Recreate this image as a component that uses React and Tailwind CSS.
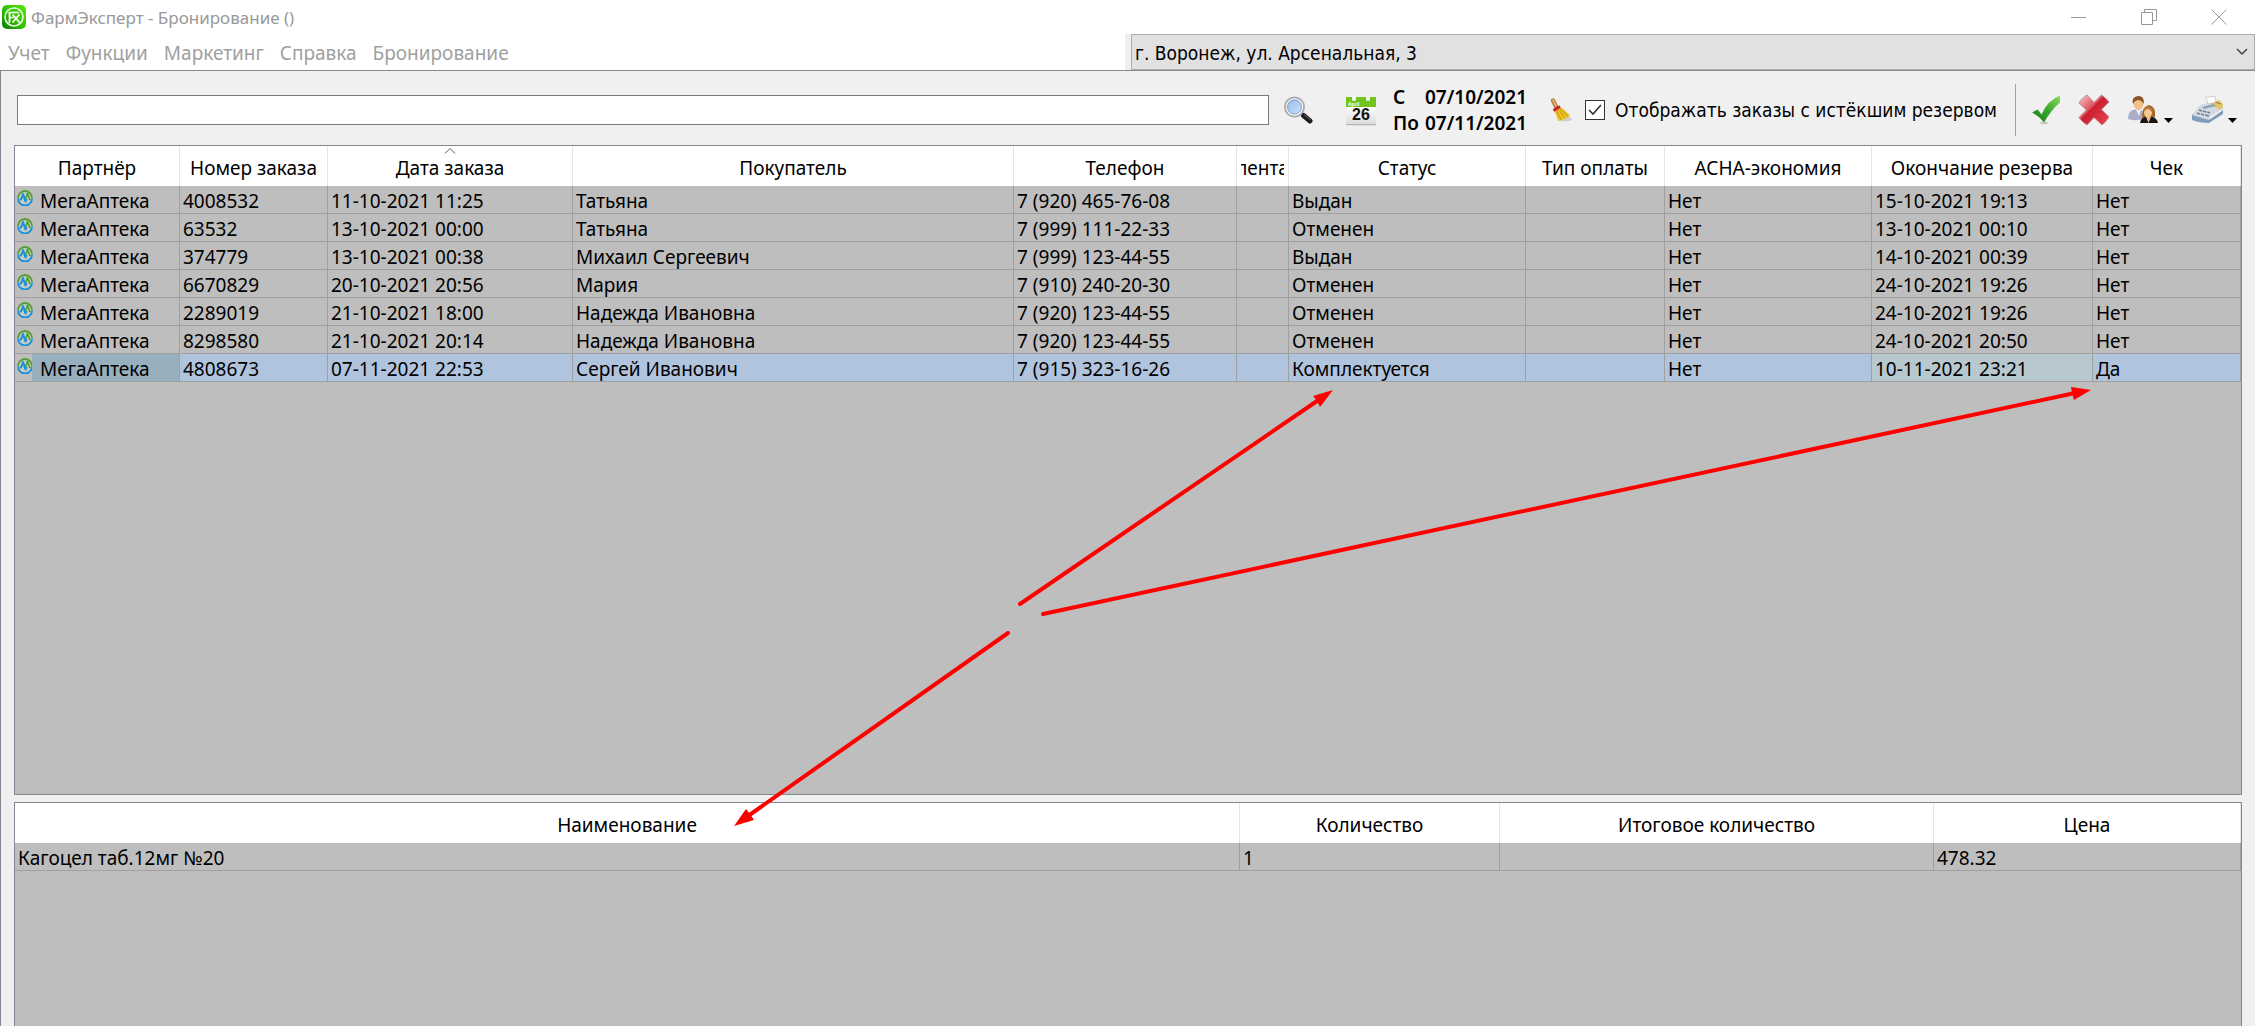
import { useState } from 'react';

const MENU = ['Учет', 'Функции', 'Маркетинг', 'Справка', 'Бронирование'];

const ORDER_COLUMNS = [
  { title: 'Партнёр', width: 'w-[165px]' },
  { title: 'Номер заказа', width: 'w-[148px]' },
  { title: 'Дата заказа', width: 'w-[245px]', sorted: true },
  { title: 'Покупатель', width: 'w-[441px]' },
  { title: 'Телефон', width: 'w-[223px]' },
  { title: 'лента', narrow: true, width: 'w-[52px]' },
  { title: 'Статус', width: 'w-[237px]' },
  { title: 'Тип оплаты', width: 'w-[139px]' },
  { title: 'АСНА-экономия', width: 'w-[207px]' },
  { title: 'Окончание резерва', width: 'w-[221px]' },
  { title: 'Чек', width: '' },
];

const ORDERS = [
  ['4008532', '11-10-2021 11:25', 'Татьяна', '7 (920) 465-76-08', '', 'Выдан', '', 'Нет', '15-10-2021 19:13', 'Нет'],
  ['63532', '13-10-2021 00:00', 'Татьяна', '7 (999) 111-22-33', '', 'Отменен', '', 'Нет', '13-10-2021 00:10', 'Нет'],
  ['374779', '13-10-2021 00:38', 'Михаил Сергеевич', '7 (999) 123-44-55', '', 'Выдан', '', 'Нет', '14-10-2021 00:39', 'Нет'],
  ['6670829', '20-10-2021 20:56', 'Мария', '7 (910) 240-20-30', '', 'Отменен', '', 'Нет', '24-10-2021 19:26', 'Нет'],
  ['2289019', '21-10-2021 18:00', 'Надежда Ивановна', '7 (920) 123-44-55', '', 'Отменен', '', 'Нет', '24-10-2021 19:26', 'Нет'],
  ['8298580', '21-10-2021 20:14', 'Надежда Ивановна', '7 (920) 123-44-55', '', 'Отменен', '', 'Нет', '24-10-2021 20:50', 'Нет'],
  ['4808673', '07-11-2021 22:53', 'Сергей Иванович', '7 (915) 323-16-26', '', 'Комплектуется', '', 'Нет', '10-11-2021 23:21', 'Да'],
];

const ITEM_COLUMNS = [
  { title: 'Наименование', width: 'w-[1225px]' },
  { title: 'Количество', width: 'w-[260px]' },
  { title: 'Итоговое количество', width: 'w-[434px]' },
  { title: 'Цена', width: '' },
];

const ITEMS = [['Кагоцел таб.12мг №20', '1', '', '478.32']];

/* ── Icons ── */

function AppLogo() {
  return (
    <svg className="size-6" viewBox="0 0 24 24" fill="none">
      <defs>
        <linearGradient id="logo" x1="1" y1="0" x2="0" y2="1">
          <stop offset="0" stopColor="#5be80a" />
          <stop offset="0.5" stopColor="#35c400" />
          <stop offset="1" stopColor="#0a7a0c" />
        </linearGradient>
      </defs>
      <rect width="24" height="24" rx="5" fill="url(#logo)" />
      <circle cx="12" cy="12" r="9" stroke="#e9fbe0" strokeWidth="1.6" />
      <path d="M7.5 18V7.5h9.5M7.5 12.5h4M10.5 9.5l7 8M17.5 9.5l-7 8" stroke="#fff" strokeWidth="1.7" />
    </svg>
  );
}

function PulseIcon() {
  return (
    <svg className="size-4 shrink-0" viewBox="0 0 16 16" fill="none">
      <circle cx="8" cy="8" r="7" fill="#c6cbc4" />
      <path d="M1 8A7 7 0 0 1 15 8" stroke="#55a035" strokeWidth="1.8" />
      <path d="M1 8.5a7 7 0 0 0 14 0" stroke="#1b90dc" strokeWidth="1.8" />
      <path d="M8.5 9l2-5.500L13 10" stroke="#55a035" strokeWidth="1.8" strokeLinejoin="round" />
      <path d="M2.500 9.500h1.500L6 4l2.500 7.500L9.500 9" stroke="#1b90dc" strokeWidth="2" strokeLinejoin="round" />
    </svg>
  );
}

function SearchIcon() {
  return (
    <svg className="h-7 w-[30px]" viewBox="0 0 30 28" fill="none">
      <defs>
        <linearGradient id="lens" x1="0" y1="0" x2="1" y2="1">
          <stop offset="0" stopColor="#8fb8ea" />
          <stop offset="1" stopColor="#d5e6fa" />
        </linearGradient>
      </defs>
      <path d="M18 17l3 3" stroke="#8a8a8a" strokeWidth="3" />
      <path d="M20.5 19.5l6.5 5.5" stroke="#1c1c1c" strokeWidth="5" strokeLinecap="round" />
      <path d="M21.5 19l5.5 4.5" stroke="#6b6b6b" strokeWidth="1" strokeLinecap="round" />
      <circle cx="11.5" cy="11" r="9.5" fill="url(#lens)" stroke="#a9a9a9" strokeWidth="2" />
      <circle cx="11.5" cy="11" r="8" stroke="#f5f5f5" strokeWidth="1.5" />
      <circle cx="11.5" cy="11" r="7" stroke="#7393bd" strokeWidth="0.8" />
    </svg>
  );
}

function CalendarIcon() {
  return (
    <svg className="size-8" viewBox="0 0 32 32">
      <defs>
        <linearGradient id="page" x1="0" y1="0" x2="0" y2="1">
          <stop offset="0" stopColor="#fff" />
          <stop offset="1" stopColor="#dcdcdc" />
        </linearGradient>
      </defs>
      <path d="M1 30.5h30" stroke="#b5b5b5" strokeWidth="1.5" />
      <path d="M2 12h28l1 18H1z" fill="url(#page)" />
      <path d="M1 3h30v10H1z" fill="#74c41f" />
      <path d="M7 1h4v5q-2 2-4 0zM21 1h4v5q-2 2-4 0z" fill="#f7f7f7" />
      <text x="3" y="12" fontSize="5" fontWeight="700" fontFamily="Liberation Sans, sans-serif" fill="#fff">April</text>
      <text x="16" y="26" textAnchor="middle" fontSize="16" fontWeight="700" fontFamily="Liberation Sans, sans-serif" fill="#111">26</text>
    </svg>
  );
}

function BroomIcon() {
  return (
    <svg className="size-6" viewBox="0 0 24 24" fill="none">
      <ellipse cx="16" cy="21" rx="7" ry="2.5" fill="#cfcfcf" />
      <path d="M4 2.5l4 8" stroke="#b98945" strokeWidth="4.5" strokeLinecap="round" />
      <path d="M4 2l3 6" stroke="#ddb87a" strokeWidth="1.5" strokeLinecap="round" />
      <path d="M5 13l6-4c4 2 8 6 10 9-3 2-7 4-12 5-1-3-2-7-4-10z" fill="#ecc52b" />
      <path d="M8 13l4 9M10 12l6 8M11 11l8 7" stroke="#b98f13" strokeWidth="0.9" />
      <path d="M4.5 12.5l6.5-4" stroke="#c3202b" strokeWidth="2.8" />
    </svg>
  );
}

function ApproveIcon() {
  return (
    <svg className="h-[30px] w-7" viewBox="0 0 28 30">
      <defs>
        <linearGradient id="approve" x1="1" y1="0" x2="0" y2="1">
          <stop offset="0" stopColor="#8fdc5c" />
          <stop offset="0.5" stopColor="#38a82c" />
          <stop offset="1" stopColor="#157a1c" />
        </linearGradient>
      </defs>
      <ellipse cx="12" cy="28" rx="4" ry="1.2" fill="#c4c4c4" />
      <path d="M0 17.500L5.500 14.500Q8 17 9.500 19.500Q16 5 28 0.500V7.500Q19 15 12 27.500Q7 21 0 17.500Z" fill="url(#approve)" />
    </svg>
  );
}

function RejectIcon() {
  return (
    <svg className="size-8" viewBox="0 0 32 32">
      <defs>
        <linearGradient id="reject" x1="0" y1="0" x2="1" y2="1">
          <stop offset="0" stopColor="#f7cdd1" />
          <stop offset="0.4" stopColor="#dd5360" />
          <stop offset="0.45" stopColor="#c9202f" />
          <stop offset="1" stopColor="#ee4452" />
        </linearGradient>
      </defs>
      <path
        d="M9 1L16 8.500L23.500 1Q28 4 31 8L23.500 15.500L31 23Q28 28 24 31L16 23.500L9 31Q4 28 1 23.500L8.500 16L1 9Q4 4 9 1Z"
        fill="url(#reject)"
        stroke="#c9848b"
        strokeWidth="1"
      />
    </svg>
  );
}

function CustomersIcon() {
  return (
    <svg className="h-7 w-[30px]" viewBox="0 0 30 28">
      <path d="M0 23Q0 14 7 13.500L13 14Q17 16 17 22Q9 26 0 23Z" fill="#a9adcb" />
      <path d="M8 14l3 6 2-6z" fill="#eef0f8" />
      <ellipse cx="10.5" cy="7.5" rx="5" ry="6.5" fill="#f4c08a" />
      <path d="M5 8Q3 1 10 0Q17 0 15.500 8Q14 4 9.500 4Q6 5 5 8Z" fill="#8a5522" />
      <path d="M14 21Q14 10 21 9Q28 10 27 21L24 24H16Z" fill="#a8692a" />
      <path d="M12 27Q13 21 18 21H24Q29 22 30 27Z" fill="#161616" />
      <ellipse cx="20" cy="16.5" rx="4" ry="5" fill="#f7c995" />
      <path d="M18 21h5l-2.500 6z" fill="#f3bb85" />
      <path d="M15.500 16Q17 11 21 11.500Q25 13 24.500 17Q22 13 19 13Z" fill="#b87a35" />
    </svg>
  );
}

function RegisterIcon() {
  return (
    <svg className="h-7 w-[33px]" viewBox="0 0 33 28">
      <path d="M1 18L18 22L32 13V18L18 27Q8 27 1 24Z" fill="#7f9cba" />
      <path d="M9 9L24 5L32 9V14L18 24L1 19Z" fill="#d3dbe2" />
      <path d="M18 8L28 4L32 8L31 14L25 12Z" fill="#e5c667" />
      <path d="M24 6l6 2" stroke="#8c7c48" strokeWidth="1" />
      <path d="M15 1.500L24 0L25 6L17 8Z" fill="#fff" stroke="#b6bdc7" strokeWidth="0.7" />
      <path d="M11 11l12-3 2 2-12 3z" fill="#8aa4be" />
      <path d="M8 14l3 1M12 15l3 1M16 16l3 1M6 17l3 1M10 18l3 1M14 19l4 1" stroke="#6f7f8f" strokeWidth="1.5" />
      <path d="M19 22l12-8" stroke="#f3f6fa" strokeWidth="1.5" />
    </svg>
  );
}

function DropArrow() {
  return (
    <svg className="mt-[22px] h-[5px] w-[9px]" viewBox="0 0 9 5">
      <path d="M0 0h9L4.500 5z" fill="#000" />
    </svg>
  );
}

/* ── Tables ── */

function HeaderCell({ column }) {
  return (
    <th
      scope="col"
      className={`relative h-10 overflow-hidden border-r border-[#e5e5e5] bg-white p-0 pt-1 text-center font-normal whitespace-nowrap ${column.width}`}
    >
      {column.sorted && (
        <svg className="absolute top-0 left-1/2 h-2 w-3 -translate-x-1/2" viewBox="0 0 12 8" fill="none">
          <path d="M1 7.500l5-5 5 5" stroke="#555" />
        </svg>
      )}
      {column.narrow ? (
        <span className="mx-1 flex justify-center overflow-hidden">{column.title}</span>
      ) : (
        column.title
      )}
    </th>
  );
}

function cellColor(selected, index) {
  if (!selected) return '';
  return index === 8 ? 'bg-[#b8c8cf]' : 'bg-[#b0c4de]';
}

function OrdersTable() {
  const [current, setCurrent] = useState('4808673');

  return (
    <table className="w-full table-fixed border-separate border-spacing-0">
      <thead>
        <tr>
          {ORDER_COLUMNS.map((column) => (
            <HeaderCell key={column.title} column={column} />
          ))}
        </tr>
      </thead>
      <tbody>
        {ORDERS.map((order) => {
          const selected = order[0] === current;
          return (
            <tr key={order[0]} onClick={() => setCurrent(order[0])}>
              <td className="h-7 border-r border-b border-[#a0a0a0] p-0">
                <div className="flex h-[27px]">
                  <span className="w-[17px] pt-1 pl-[2px]">
                    <PulseIcon />
                  </span>
                  <span className={`flex-1 pt-[3px] pl-2 leading-6 ${selected ? 'bg-[#98afbe]' : ''}`}>МегаАптека</span>
                </div>
              </td>
              {order.map((value, i) => (
                <td
                  key={i}
                  className={`h-7 border-r border-b border-[#a0a0a0] p-0 pt-[3px] pl-[3px] leading-6 whitespace-nowrap ${cellColor(selected, i)}`}
                >
                  {value}
                </td>
              ))}
            </tr>
          );
        })}
      </tbody>
    </table>
  );
}

function ItemsTable() {
  return (
    <table className="w-full table-fixed border-separate border-spacing-0">
      <thead>
        <tr>
          {ITEM_COLUMNS.map((column) => (
            <HeaderCell key={column.title} column={column} />
          ))}
        </tr>
      </thead>
      <tbody>
        {ITEMS.map((item) => (
          <tr key={item[0]}>
            {item.map((value, i) => (
              <td
                key={i}
                className="h-7 border-r border-b border-[#a0a0a0] p-0 pt-[3px] pl-[3px] leading-6 whitespace-nowrap"
              >
                {value}
              </td>
            ))}
          </tr>
        ))}
      </tbody>
    </table>
  );
}

/* ── Red pointers drawn over both tables ── */
function Pointers() {
  return (
    <svg
      className="pointer-events-none absolute inset-0 h-full w-full"
      viewBox="0 0 2255 1026"
      preserveAspectRatio="none"
      aria-hidden="true"
    >
      <g stroke="#f00" strokeWidth="4" strokeLinecap="round">
        <path d="M1020 604L1320 399" />
        <path d="M1043 614L2075 393" />
        <path d="M1008 633L748 816" />
      </g>
      <g fill="#f00">
        <path d="M1333 390L1313 396L1317 401L1320 407Z" />
        <path d="M2091 390L2071 387L2072 393L2074 400Z" />
        <path d="M734 826L746 809L750 814L754 820Z" />
      </g>
    </svg>
  );
}

export default function App() {
  const [showExpired, setShowExpired] = useState(true);
  const [query, setQuery] = useState('');

  return (
    <div className="relative flex h-screen flex-col overflow-hidden bg-white font-['Noto_Sans',sans-serif] text-[19px] leading-[25px] text-black">
      {/* ── Title bar ── */}
      <header className="flex h-[34px] items-center justify-between pr-7 pl-[2px] text-[#999]">
        <h1 className="flex items-center gap-[5px] text-[17px]">
          <AppLogo />
          ФармЭксперт - Бронирование ()
        </h1>
        <div className="flex gap-[54px]">
          <button aria-label="Свернуть">
            <svg className="size-4" viewBox="0 0 16 16" stroke="#999"><path d="M0 8.500h15" /></svg>
          </button>
          <button aria-label="Развернуть">
            <svg className="size-4" viewBox="0 0 16 16" fill="none" stroke="#999">
              <path d="M0.500 3.500h11v12h-11zM3.500 3.500v-3h12v11h-4" />
            </svg>
          </button>
          <button aria-label="Закрыть">
            <svg className="size-4" viewBox="0 0 16 16" stroke="#999"><path d="M0.500 0.500l15 15M15.500 0.500l-15 15" /></svg>
          </button>
        </div>
      </header>

      {/* ── Menu and pharmacy address ── */}
      <div className="flex h-9">
        <nav className="flex flex-1 items-center gap-4 pt-[2px] pl-2 text-[#a0a0a0]">
          {MENU.map((item) => (
            <button key={item}>{item}</button>
          ))}
        </nav>
        <div className="relative w-[1130px] border-l-6 border-[#efefef]">
          <select
            aria-label="Адрес аптеки"
            className="h-full w-full appearance-none border border-[#adadad] bg-[#e1e1e1] pt-[2px] pl-[3px] font-['DejaVu_Sans_Condensed','DejaVu_Sans',sans-serif]"
          >
            <option>г. Воронеж, ул. Арсенальная, 3</option>
          </select>
          <svg className="pointer-events-none absolute top-[14px] right-[7px] h-2 w-3" viewBox="0 0 12 8" fill="none">
            <path d="M1 1l5 5 5-5" stroke="#444" strokeWidth="1.5" />
          </svg>
        </div>
      </div>

      <main className="flex min-h-0 flex-1 flex-col border-t border-l border-[#828790] bg-[#f0f0f0] px-[13px]">
        {/* ── Toolbar ── */}
        <div className="flex h-[74px] shrink-0 items-center pt-1 pr-[5px] pl-[3px]">
          <input
            type="text"
            aria-label="Поиск"
            value={query}
            onChange={(e) => setQuery(e.target.value)}
            className="h-[30px] min-w-0 flex-1 border border-[#7a7a7a] bg-white px-1 outline-none"
          />
          <button aria-label="Найти" className="ml-[14px]"><SearchIcon /></button>
          <button aria-label="Календарь" className="ml-8"><CalendarIcon /></button>
          <div className="ml-4 grid grid-cols-[32px_auto] leading-[26px] font-semibold">
            <span>С</span>
            <time>07/10/2021</time>
            <span>По</span>
            <time>07/11/2021</time>
          </div>
          <button aria-label="Очистить период" className="ml-[22px]"><BroomIcon /></button>
          <label className="ml-3 flex items-center gap-[10px] font-['DejaVu_Sans_Condensed','DejaVu_Sans',sans-serif]">
            <span className="relative flex">
              <input
                type="checkbox"
                checked={showExpired}
                onChange={(e) => setShowExpired(e.target.checked)}
                className="size-5 appearance-none border border-[#333] bg-white"
              />
              {showExpired && (
                <svg className="pointer-events-none absolute inset-0 size-5" viewBox="0 0 20 20" fill="none">
                  <path d="M4 10l4 4 8-9" stroke="#333" strokeWidth="1.6" />
                </svg>
              )}
            </span>
            Отображать заказы с истёкшим резервом
          </label>
          <div className="ml-[18px] h-[52px] w-px bg-[#a0a0a0]" />
          <button aria-label="Подтвердить" className="ml-4"><ApproveIcon /></button>
          <button aria-label="Отменить" className="ml-[18px]"><RejectIcon /></button>
          <button aria-label="Покупатели" className="ml-[18px] flex gap-[6px]"><CustomersIcon /><DropArrow /></button>
          <button aria-label="Касса" className="ml-[18px] flex gap-1"><RegisterIcon /><DropArrow /></button>
        </div>

        {/* ── Orders ── */}
        <section className="min-h-0 flex-1 border border-[#828790] bg-[#bebebe]">
          <OrdersTable />
        </section>

        {/* ── Order contents ── */}
        <section className="mt-[7px] h-[224px] shrink-0 border border-b-0 border-[#828790] bg-[#bebebe]">
          <ItemsTable />
        </section>
      </main>

      <Pointers />
    </div>
  );
}
